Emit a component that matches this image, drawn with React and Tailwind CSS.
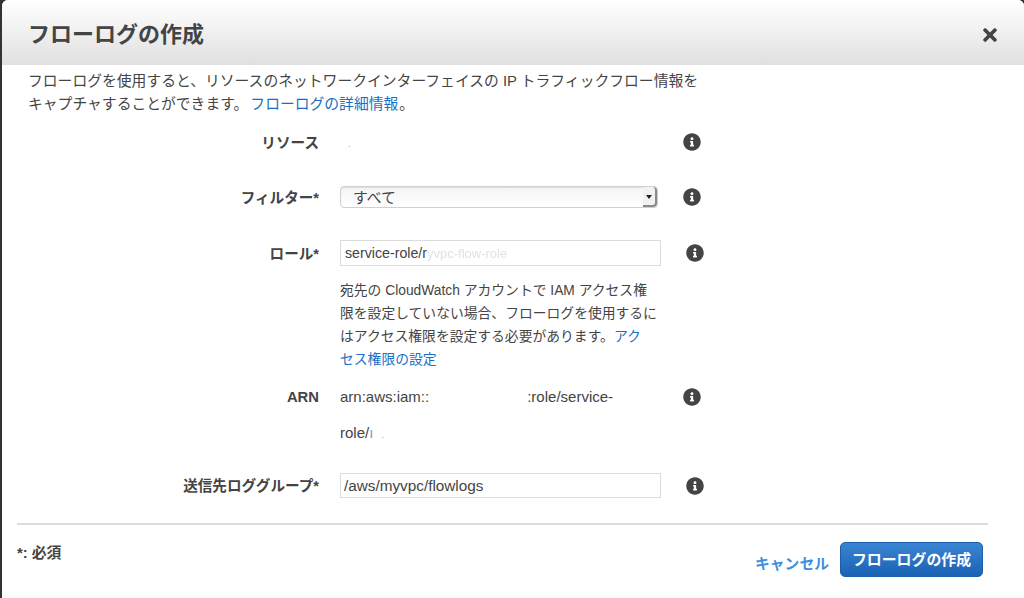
import { FaInfoCircle, FaTimes } from 'react-icons/fa'

const font = { fontFamily: '"Liberation Sans", "Noto Sans CJK JP", sans-serif' }

function Row({ label, children, top = '', iconClass = 'ml-[22px]' }) {
  return (
    <div className={`flex items-center ${top}`}>
      <div className="w-[291px] shrink-0 pt-[3px] text-right text-[14.6px] font-bold text-[#444]">{label}</div>
      <div className="ml-[21px] w-[321px] shrink-0">{children}</div>
      <FaInfoCircle className={`shrink-0 text-[18px] text-[#444] ${iconClass}`} />
    </div>
  )
}

export default function App() {
  return (
    <div style={font} className="h-[598px] w-[1024px] overflow-hidden bg-[#333]">
      <div className="ml-[2px] h-full rounded-t-md bg-white text-[14.8px] text-[#444]">
        {/* Header */}
        <div className="flex h-[65px] items-center justify-between rounded-t-md bg-gradient-to-b from-white to-[#e0e0e0] pl-[26px] pr-[24px] pt-[4px]">
          <h1 className="text-[22px] font-bold text-[#444]">フローログの作成</h1>
          <FaTimes className="text-[20px] text-[#444]" />
        </div>

        {/* Intro */}
        <p className="pl-[26px] pt-[5px] leading-[23px]">
          フローログを使用すると、リソースのネットワークインターフェイスの IP トラフィックフロー情報を
          <br />
          キャプチャすることができます。<a className="ml-[2px] text-[#1a6fc4]">フローログの詳細情報</a>
          <span className="ml-[1px]">。</span>
        </p>

        {/* Form */}
        <div className="pl-[26px]">
          <Row label="リソース" top="mt-[14px] h-[24px]">
            <span className="ml-[8px] text-[10px] text-[#aaa]">.</span>
          </Row>
          <Row label="フィルター*" top="mt-[31px] h-[24px]">
            <div className="flex h-[22px] w-[318px] items-center justify-between rounded-[4px] border border-[#cfcfcf] bg-gradient-to-b from-[#f4f4f4] to-white pl-[12px] shadow-[inset_0_1px_1px_#ddd]">
              <span className="pt-[3px]">すべて</span>
              <div className="flex h-full w-[14px] items-center justify-center rounded-r-[4px] border-b-2 border-r-2 border-[#8a8a8a] bg-[#f2f2f2]">
                <span className="mt-[1px] h-0 w-0 border-x-[3px] border-t-[4px] border-x-transparent border-t-[#222]" />
              </div>
            </div>
          </Row>
          <Row label="ロール*" top="mt-[31px] h-[26px]" iconClass="ml-[25px]">
            <div className="flex h-[26px] items-center border border-[#dcdcdc] pl-[4px] pt-[2px] text-[14.2px]">
              service-role/r<span className="text-[13px] text-[#e2e2e2] blur-[0.5px]">yvpc-flow-role</span>
            </div>
          </Row>

          <div className="ml-[312px] mt-[13px] w-[321px] whitespace-nowrap text-[13.8px] leading-[23px]">
            宛先の CloudWatch アカウントで IAM アクセス権
            <br />
            限を設定していない場合、フローログを使用するに
            <br />
            はアクセス権限を設定する必要があります。
            <a className="text-[#1a6fc4]">アク</a>
            <br />
            <a className="text-[#1a6fc4]">セス権限の設定</a>
          </div>

          <div className="mt-[8px] flex items-start leading-[36px]">
            <div className="w-[291px] shrink-0 text-right font-bold text-[#444]">ARN</div>
            <div className="ml-[21px] w-[321px] shrink-0 text-[15px]">
              arn:aws:iam::<span className="inline-block w-[98px]" />:role/service-
              <br />
              role/<span className="text-[#999]">ı</span>
              <span className="ml-[8px] text-[10px] text-[#aaa]">.</span>
            </div>
            <FaInfoCircle className="ml-[22px] mt-[9px] shrink-0 text-[18px] text-[#444]" />
          </div>

          <Row label="送信先ロググループ*" top="mt-[20px] h-[25px]" iconClass="ml-[25px]">
            <div className="flex h-[25px] items-center border border-[#dcdcdc] pl-[3px] pt-[1px] text-[15.3px]">/aws/myvpc/flowlogs</div>
          </Row>
        </div>

        {/* Footer */}
        <div className="ml-[15px] mt-[25px] w-[971px] border-t-2 border-[#dcdcdc]">
          <div className="flex items-start justify-between pr-[5px]">
            <span className="mt-[17px] font-bold text-[#444]">*: 必須</span>
            <div className="mt-[17px] flex items-start gap-[11px]">
              <a className="mt-[11px] font-bold text-[#3d8fdc]">キャンセル</a>
              <button className="h-[35px] w-[143px] rounded-[5px] border border-[#1c5fa8] bg-gradient-to-b from-[#3a85d3] to-[#1a62b4] pt-[1px] text-[14.9px] font-bold text-white">
                フローログの作成
              </button>
            </div>
          </div>
        </div>
      </div>
    </div>
  )
}
